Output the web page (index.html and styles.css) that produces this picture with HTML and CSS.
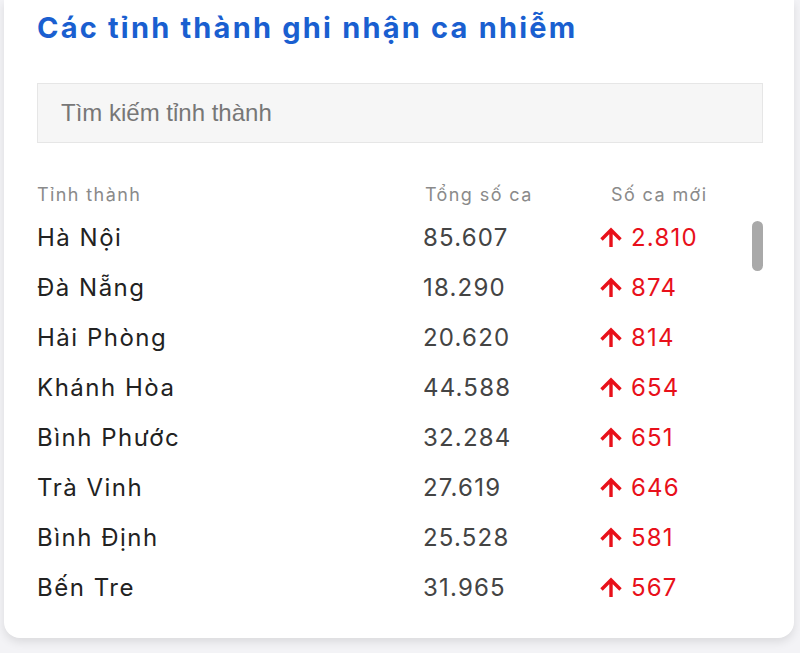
FILE: index.html
```html
<!DOCTYPE html>
<html lang="vi">
<head>
<meta charset="utf-8">
<title>Các tỉnh thành ghi nhận ca nhiễm</title>
<link rel="stylesheet" href="styles.css">
</head>
<body>
<section class="card">
  <h2 class="title">Các tỉnh thành ghi nhận ca nhiễm</h2>
  <input class="search" type="text" placeholder="Tìm kiếm tỉnh thành">
  <div class="table-head">
    <span>Tỉnh thành</span>
    <span>Tổng số ca</span>
    <span class="head-new">Số ca mới</span>
  </div>
  <div class="rows">
    <div class="row"><span class="name">Hà Nội</span><span class="total">85.607</span><span class="new"><svg class="arrow" viewBox="0 0 22 20"><path d="M11 20V3M1.5 12.5L11 3l9.5 9.5"/></svg>2.810</span></div>
    <div class="row"><span class="name">Đà Nẵng</span><span class="total">18.290</span><span class="new"><svg class="arrow" viewBox="0 0 22 20"><path d="M11 20V3M1.5 12.5L11 3l9.5 9.5"/></svg>874</span></div>
    <div class="row"><span class="name">Hải Phòng</span><span class="total">20.620</span><span class="new"><svg class="arrow" viewBox="0 0 22 20"><path d="M11 20V3M1.5 12.5L11 3l9.5 9.5"/></svg>814</span></div>
    <div class="row"><span class="name">Khánh Hòa</span><span class="total">44.588</span><span class="new"><svg class="arrow" viewBox="0 0 22 20"><path d="M11 20V3M1.5 12.5L11 3l9.5 9.5"/></svg>654</span></div>
    <div class="row"><span class="name">Bình Phước</span><span class="total">32.284</span><span class="new"><svg class="arrow" viewBox="0 0 22 20"><path d="M11 20V3M1.5 12.5L11 3l9.5 9.5"/></svg>651</span></div>
    <div class="row"><span class="name">Trà Vinh</span><span class="total">27.619</span><span class="new"><svg class="arrow" viewBox="0 0 22 20"><path d="M11 20V3M1.5 12.5L11 3l9.5 9.5"/></svg>646</span></div>
    <div class="row"><span class="name">Bình Định</span><span class="total">25.528</span><span class="new"><svg class="arrow" viewBox="0 0 22 20"><path d="M11 20V3M1.5 12.5L11 3l9.5 9.5"/></svg>581</span></div>
    <div class="row"><span class="name">Bến Tre</span><span class="total">31.965</span><span class="new"><svg class="arrow" viewBox="0 0 22 20"><path d="M11 20V3M1.5 12.5L11 3l9.5 9.5"/></svg>567</span></div>
    <div class="thumb"></div>
  </div>
</section>
</body>
</html>
```

FILE: styles.css
```css
html, body {
  margin: 0;
  padding: 0;
}
body {
  background: #f3f3f6;
  font-family: Inter, "Noto Sans", sans-serif;
  width: 800px;
  height: 653px;
  overflow: hidden;
}
.card {
  box-sizing: border-box;
  width: 790px;
  margin: 0 0 0 4px;
  padding: 8px 31px 26px 33px;
  background: #ffffff;
  border-radius: 0 0 16px 16px;
  box-shadow: 0 4px 10px rgba(0, 0, 0, 0.10);
}
.title {
  margin: 0;
  font-size: 29px;
  line-height: 40px;
  font-weight: 700;
  color: #1a5fd0;
  letter-spacing: 2.2px;
}
.search {
  display: block;
  box-sizing: border-box;
  width: 100%;
  height: 60px;
  margin-top: 35px;
  padding: 0 23px;
  background: #f6f6f6;
  border: 1px solid #e6e6e6;
  border-radius: 0;
  font-family: "Liberation Sans", Arial, sans-serif;
  font-size: 24px;
  color: #333;
  outline: none;
}
.search::placeholder {
  color: #777777;
}
.table-head,
.row {
  display: grid;
  grid-template-columns: 386px 177px 1fr;
  align-items: center;
}
.table-head {
  margin-top: 39px;
  height: 24px;
  font-size: 18px;
  letter-spacing: 1.4px;
  color: #8a8a8a;
}
.table-head span:nth-child(2) {
  padding-left: 2px;
}
.head-new {
  padding-left: 11px;
}
.rows {
  position: relative;
  margin-top: 6px;
}
.row {
  height: 50px;
  font-size: 24px;
  letter-spacing: 1.2px;
}
.name {
  color: #222;
  letter-spacing: 1.5px;
}
.total {
  color: #444;
}
.new {
  display: flex;
  align-items: center;
  gap: 9px;
  color: #e8101a;
}
.arrow {
  width: 22px;
  height: 20px;
  flex: none;
  fill: none;
  stroke: #e8101a;
  stroke-width: 3.4;
}
.thumb {
  position: absolute;
  top: 9px;
  right: 0;
  width: 11px;
  height: 50px;
  border-radius: 6px;
  background: #a9a9a9;
}
```
